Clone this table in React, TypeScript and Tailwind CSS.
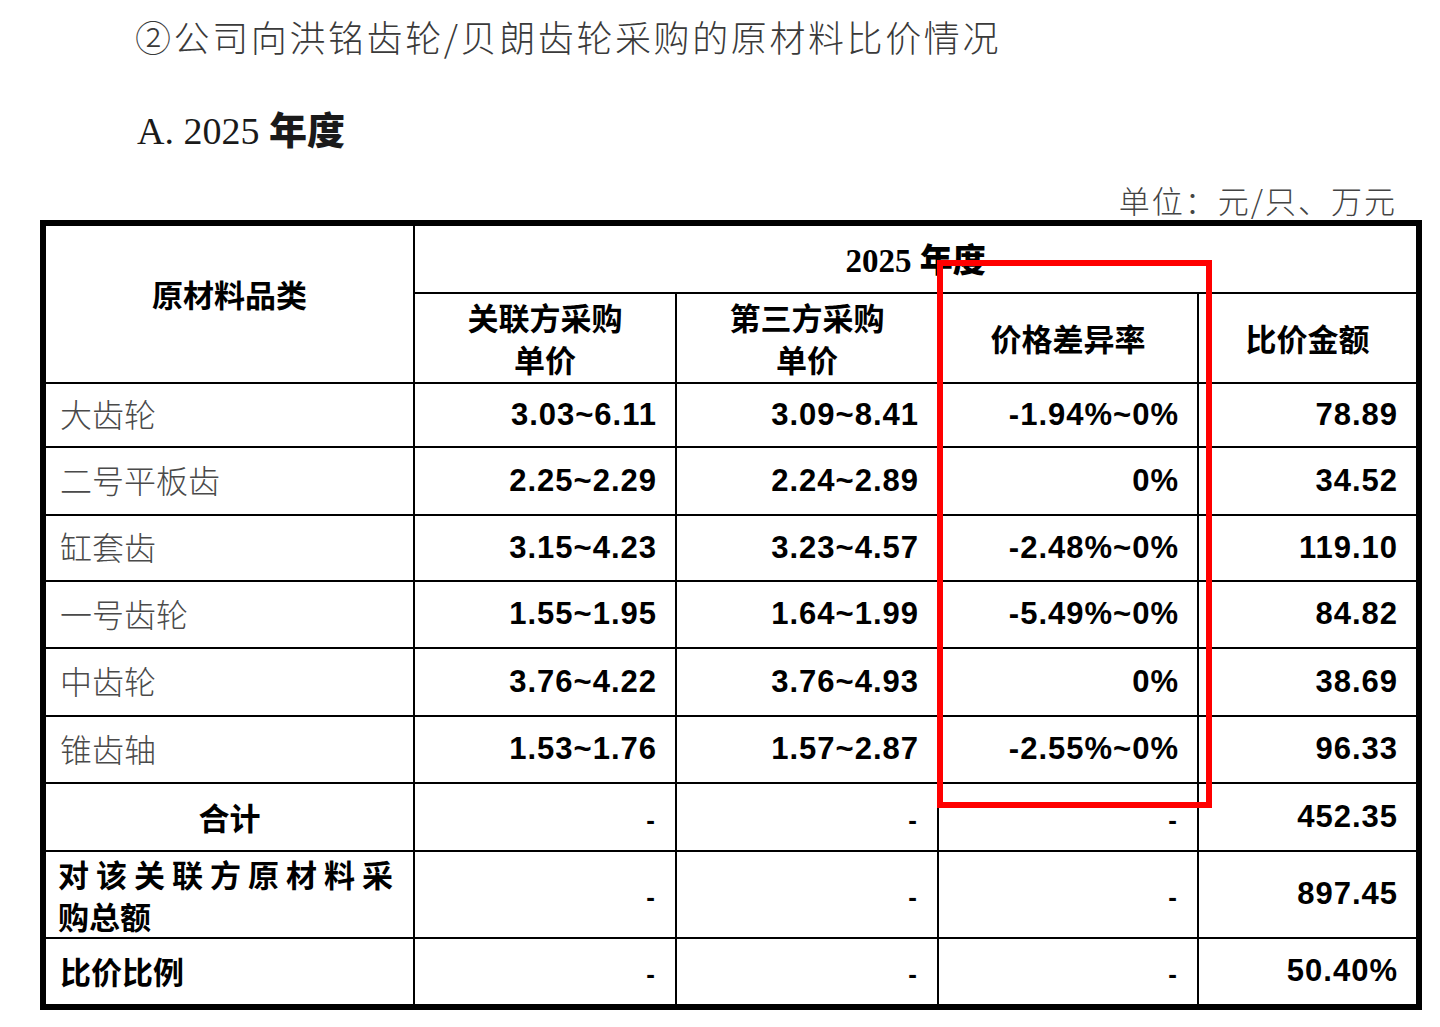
import React from "react";

const rows = [
  { name: "大齿轮", a: "3.03~6.11", b: "3.09~8.41", c: "-1.94%~0%", d: "78.89", h: "h-[64px]" },
  { name: "二号平板齿", a: "2.25~2.29", b: "2.24~2.89", c: "0%", d: "34.52", h: "h-[68px]" },
  { name: "缸套齿", a: "3.15~4.23", b: "3.23~4.57", c: "-2.48%~0%", d: "119.10", h: "h-[66px]" },
  { name: "一号齿轮", a: "1.55~1.95", b: "1.64~1.99", c: "-5.49%~0%", d: "84.82", h: "h-[67px]" },
  { name: "中齿轮", a: "3.76~4.22", b: "3.76~4.93", c: "0%", d: "38.69", h: "h-[68px]" },
  { name: "锥齿轴", a: "1.53~1.76", b: "1.57~2.87", c: "-2.55%~0%", d: "96.33", h: "h-[67px]" },
];

const num = "font-['Liberation_Sans',sans-serif] font-bold text-[31px] text-black text-right pr-[18px] border-2 border-black tracking-[1px]";
const dash = "font-['Liberation_Sans',sans-serif] font-bold text-[26px] text-black text-right pr-[20px] pt-[6px] border-2 border-black";
const headCell = "font-['Noto_Sans_CJK_SC',sans-serif] font-bold text-[31px] leading-[42px] text-black text-center border-2 border-black";

export default function App() {
  return (
    <div className="min-h-[1027px] w-[1440px] bg-white">
      <div className="pt-[14px] pl-[135px] text-[36px] leading-[44px] tracking-[2.6px] text-[#3a3a3a] font-['Noto_Sans_CJK_SC',sans-serif] font-light">
        ②公司向洪铭齿轮/贝朗齿轮采购的原材料比价情况
      </div>
      <div className="mt-[48px] pl-[137px] text-[38px] leading-[44px] text-[#1a1a1a]">
        <span className="font-['Liberation_Serif',serif]">A. 2025 </span>
        <span className="font-['Noto_Sans_CJK_SC',sans-serif] font-black">年度</span>
      </div>
      <div className="mt-[27px] pr-[43px] text-right text-[31px] leading-[40px] tracking-[2px] text-[#444] font-['Noto_Sans_CJK_SC',sans-serif] font-light">
        单位：元/只、万元
      </div>
      <div className="relative mt-[0px] ml-[40px] w-[1376px]">
        <table className="w-[1376px] table-fixed border-collapse border-[6px] border-black">
          <colgroup>
            <col className="w-[371px]" />
            <col className="w-[262px]" />
            <col className="w-[262px]" />
            <col className="w-[260px]" />
            <col className="w-[221px]" />
          </colgroup>
          <thead>
            <tr className="h-[70px]">
              <th rowSpan={2} className={headCell}>
                原材料品类
                <div className="h-[20px]" />
              </th>
              <th colSpan={4} className="text-center border-2 border-black text-black text-[33px] pt-[2px]">
                <span className="font-['Liberation_Serif',serif] font-bold">2025 </span>
                <span className="font-['Noto_Sans_CJK_SC',sans-serif] font-black">年度</span>
              </th>
            </tr>
            <tr className="h-[90px]">
              <th className={headCell}>
                关联方采购
                <br />
                单价
              </th>
              <th className={headCell}>
                第三方采购
                <br />
                单价
              </th>
              <th className={headCell}>价格差异率</th>
              <th className={headCell}>比价金额</th>
            </tr>
          </thead>
          <tbody>
            {rows.map((r) => (
              <tr key={r.name} className={r.h}>
                <td className="pl-[14px] pb-[4px] border-2 border-black text-[32px] text-[#4a4a4a] font-['Noto_Sans_CJK_SC',sans-serif] font-light">
                  {r.name}
                </td>
                <td className={num}>{r.a}</td>
                <td className={num}>{r.b}</td>
                <td className={num}>{r.c}</td>
                <td className={num}>{r.d}</td>
              </tr>
            ))}
            <tr className="h-[68px]">
              <td className={headCell}>合计</td>
              <td className={dash}>-</td>
              <td className={dash}>-</td>
              <td className={dash}>-</td>
              <td className={num}>452.35</td>
            </tr>
            <tr className="h-[87px]">
              <td className="pl-[12px] border-2 border-black text-[31px] leading-[42px] text-black font-['Noto_Sans_CJK_SC',sans-serif] font-bold">
                <span className="tracking-[7px]">对该关联方原材料采</span>
                <br />
                <span>购总额</span>
              </td>
              <td className={dash}>-</td>
              <td className={dash}>-</td>
              <td className={dash}>-</td>
              <td className={num}>897.45</td>
            </tr>
            <tr className="h-[69px]">
              <td className="pl-[14px] border-2 border-black text-[31px] text-black font-['Noto_Sans_CJK_SC',sans-serif] font-bold">
                比价比例
              </td>
              <td className={dash}>-</td>
              <td className={dash}>-</td>
              <td className={dash}>-</td>
              <td className={num}>50.40%</td>
            </tr>
          </tbody>
        </table>
        <div className="pointer-events-none absolute left-[897px] top-[40px] w-[275px] h-[548px] border-[6px] border-[#ff0000]" />
      </div>
    </div>
  );
}
